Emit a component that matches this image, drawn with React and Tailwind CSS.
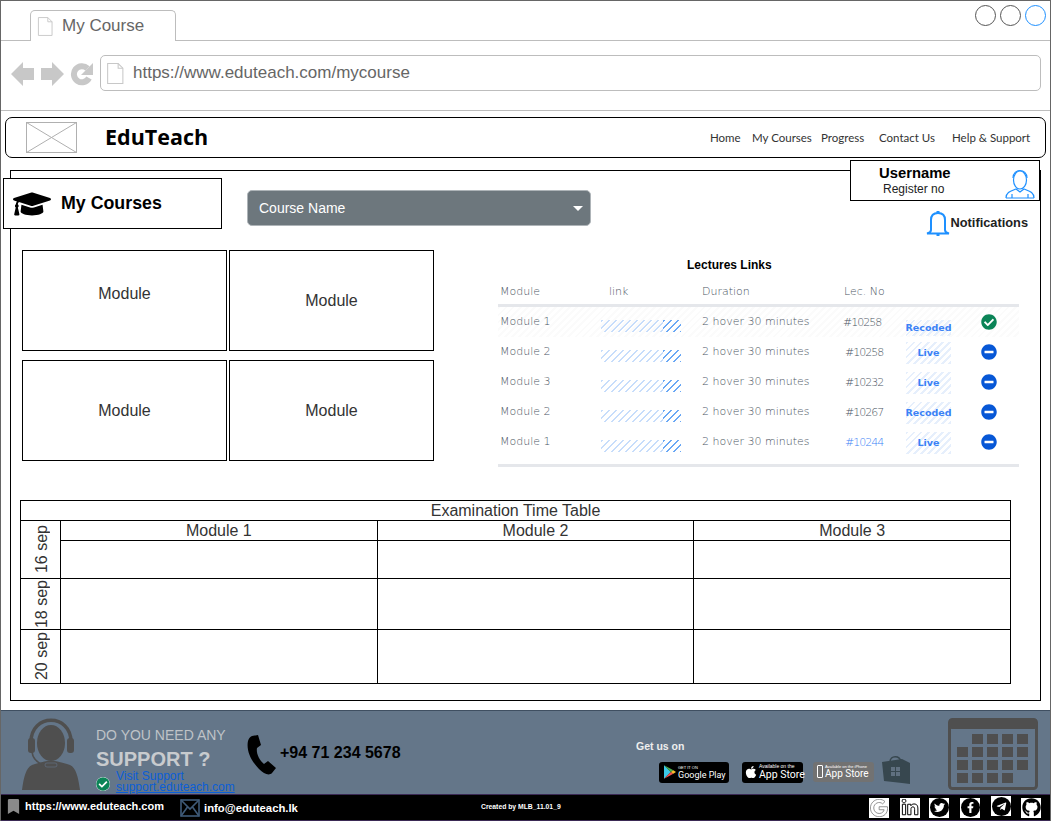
import React from "react";
import { FaGraduationCap, FaCheckCircle, FaMinusCircle, FaApple, FaTwitter, FaFacebookF, FaTelegramPlane, FaGithub, FaGoogle, FaLinkedinIn, FaBookmark } from "react-icons/fa";

const DocIcon = ({ className }) => (
  <svg viewBox="0 0 17 20" className={className} fill="none" stroke="#c8c8c8" strokeWidth="1">
    <path d="M1.5 .5h10l4.5 4.5v14.5h-14.5z" />
    <path d="M11.5 .5v4.5h4.5" />
  </svg>
);

const rows = [
  { m: "Module 1", lec: "#10258", tag: "Recoded", done: true, lecX: "ml-0", tagY: "h-[16px] translate-y-[6px]" },
  { m: "Module 2", lec: "#10258", tag: "Live", lecX: "ml-[2px]", tagY: "h-[22px] translate-y-[1px]" },
  { m: "Module 3", lec: "#10232", tag: "Live", lecX: "ml-[2px]", tagY: "h-[22px] translate-y-[1px]" },
  { m: "Module 2", lec: "#10267", tag: "Recoded", lecX: "ml-[2px]", tagY: "h-[22px] translate-y-[1px]" },
  { m: "Module 1", lec: "#10244", tag: "Live", lecX: "ml-[2px] text-[#3b82f6]", tagY: "h-[22px] translate-y-[1px]" },
];

function ModuleBox({ up }) {
  return (
    <div className={`w-[205px] h-[101px] border border-black flex items-center justify-center text-[16px] text-[#333] ${up ? "pb-[14px]" : ""}`}>
      Module
    </div>
  );
}

function LectureTable() {
  const sketch = "font-['DejaVu_Sans'] font-extralight text-[11px] text-[#4b5563]";
  return (
    <div className="w-[521px] ml-[64px]">
      <div className="pl-[189px] h-[32px] pt-[7px] text-[12px] leading-[16px] font-bold text-black">Lectures Links</div>
      <div className={`grid grid-cols-[103px_101px_141px_63px_45px_1fr] h-[25px] items-center border-b-[3px] border-[#e5e7eb] ${sketch} pb-[1px]`}>
        <span className="pl-[2px]">Module</span>
        <span className="pl-[8px]">link</span>
        <span>Duration</span>
        <span className="pl-[1px]">Lec. No</span>
        <span />
        <span />
      </div>
      <div className="border-b-[3px] border-[#e5e7eb] pb-[7px]">
        {rows.map((r, i) => (
          <div key={i} className={`grid grid-cols-[103px_101px_141px_63px_45px_1fr] h-[30px] items-center ${sketch} ${i === 0 ? "bg-[repeating-linear-gradient(135deg,#fbfbfb_0_2px,transparent_2px_5px)]" : ""}`}>
            <span className="pl-[2px]">{r.m}</span>
            <span className="h-[12px] w-[80px] translate-y-[4px] flex">
              <span className="w-[62px] bg-[repeating-linear-gradient(135deg,#c7ddfb_0_1.5px,transparent_1.5px_5px)]" />
              <span className="w-[18px] bg-[repeating-linear-gradient(135deg,#6aa8f5_0_1.5px,transparent_1.5px_5px)]" />
            </span>
            <span className="whitespace-nowrap">2 hover 30 minutes</span>
            <span className={`${r.lecX} tracking-[-1px] translate-y-[1px]`}>{r.lec}</span>
            <span className={`${r.tagY} flex items-center justify-center bg-[repeating-linear-gradient(135deg,#e6effc_0_2px,transparent_2px_5px)] font-['DejaVu_Sans'] font-bold text-[9.5px] text-[#3b82f6] whitespace-nowrap`}>{r.tag}</span>
            <span className="pl-[30px]">
              {r.done ? <FaCheckCircle className="text-[#0b8457] text-[16px]" /> : <FaMinusCircle className="text-[#0757d6] text-[16px]" />}
            </span>
          </div>
        ))}
      </div>
    </div>
  );
}

function DateLabel({ children }) {
  return (
    <div className="flex justify-center pl-[3px]">
      <span className="[writing-mode:vertical-rl] rotate-180 text-[16px] leading-[18px] text-[#333] whitespace-nowrap">{children}</span>
    </div>
  );
}

function ExamTable() {
  const cell = "border border-black p-0";
  const head = "border border-black p-0 pt-[1px] text-center text-[16px] leading-[18px]";
  const dateCell = "border border-black p-0 align-middle";
  return (
    <table className="ml-[9px] mt-[33px] w-[991px] border-collapse table-fixed text-[#333]">
      <colgroup>
        <col className="w-[40px]" />
        <col />
        <col />
        <col />
      </colgroup>
      <tbody>
        <tr className="h-[20px]">
          <td colSpan={4} className={head}>Examination Time Table</td>
        </tr>
        <tr className="h-[20px]">
          <td rowSpan={2} className={dateCell}><DateLabel>16 sep</DateLabel></td>
          <td className={head}>Module 1</td>
          <td className={head}>Module 2</td>
          <td className={head}>Module 3</td>
        </tr>
        <tr className="h-[38px]"><td className={cell} /><td className={cell} /><td className={cell} /></tr>
        <tr className="h-[51px]">
          <td className={dateCell}><DateLabel>18 sep</DateLabel></td>
          <td className={cell} /><td className={cell} /><td className={cell} />
        </tr>
        <tr className="h-[54px]">
          <td className={dateCell}><DateLabel>20 sep</DateLabel></td>
          <td className={cell} /><td className={cell} /><td className={cell} />
        </tr>
      </tbody>
    </table>
  );
}

const PersonIcon = () => (
  <svg viewBox="0 0 60 72" className="w-[60px] h-[72px] shrink-0" fill="#4f4f4f">
    <path d="M1 72 C3 58 5 50 11 47 C17 45 22 44 26 43 L34 43 C38 44 43 45 49 47 C55 50 57 58 59 72 Z" />
    <ellipse cx="30" cy="25" rx="14" ry="18" />
    <path d="M10 24 C10 -5 50 -5 50 24" fill="none" stroke="#4f4f4f" strokeWidth="3.5" />
    <rect x="7" y="20" width="7" height="15" rx="3" />
    <rect x="46" y="20" width="7" height="15" rx="3" />
    <path d="M11 34 C12 42 18 46 26 48" fill="none" stroke="#4f4f4f" strokeWidth="1.6" />
    <rect x="24" y="45" width="12" height="4" rx="2" fill="#4f4f4f" stroke="#647689" strokeWidth=".6" />
  </svg>
);

const PhoneIcon = () => (
  <svg viewBox="0 0 30 40" className="w-[30px] h-[40px] shrink-0" fill="#000">
    <path d="M5 1 L11 0 L14 10 L10 13 C9 18 12 25 17 29 L21 26 L29 33 L25 38 C22 41 17 39 12 34 C4 26 -1 15 1 6 C2 3 3 2 5 1Z" />
  </svg>
);

const CalendarIcon = () => {
  const ys = [16, 29, 42, 55];
  const rowsX = [[24, 39, 54, 69], [9, 24, 39, 54, 69], [9, 24, 39, 54, 69], [9, 24, 39, 54]];
  return (
    <svg viewBox="0 0 90 72" className="w-[90px] h-[72px]" fill="#4f4f4f">
      <rect x="1.5" y="1.5" width="87" height="69" rx="3" fill="none" stroke="#4f4f4f" strokeWidth="3" />
      <rect x="1" y="1" width="88" height="10" rx="3" />
      {rowsX.map((xs, i) => xs.map((x) => <rect key={`${i}-${x}`} x={x} y={ys[i]} width="11" height="10" />))}
    </svg>
  );
};

const BagIcon = () => (
  <svg viewBox="0 0 28 29" className="w-[28px] h-[29px]">
    <path d="M8 7 C8 0 18 0 19 7" fill="none" stroke="#37474f" strokeWidth="1.5" />
    <path d="M0 7 L20 4 L28 8 L28 29 L20 28 L2 26 Z" fill="#37474f" />
    <rect x="9" y="12" width="4" height="4" fill="#607080" />
    <rect x="14" y="12" width="4" height="4" fill="#607080" />
    <rect x="9" y="17" width="4" height="4" fill="#607080" />
    <rect x="14" y="17" width="4" height="4" fill="#607080" />
  </svg>
);

const PlayTriangle = () => (
  <svg viewBox="0 0 14 16" className="w-[12px] h-[14px] shrink-0">
    <path d="M0 0 L8 8 L0 16Z" fill="#3bc8e7" />
    <path d="M0 0 L11 6 L8 8Z" fill="#4caf50" />
    <path d="M0 16 L11 10 L8 8Z" fill="#ef5350" />
    <path d="M11 6 L14 8 L11 10 L8 8Z" fill="#fbc02d" />
  </svg>
);

const Social = ({ children, className = "" }) => (
  <div className={`w-[20px] h-[20px] bg-white flex items-center justify-center shrink-0 ${className}`}>{children}</div>
);

const Round = ({ children }) => (
  <span className="w-[19px] h-[19px] rounded-full bg-black text-white flex items-center justify-center text-[11px]">{children}</span>
);

export default function App() {
  return (
    <div className="box-border w-[1051px] h-[821px] border-x border-t border-[#666] bg-white overflow-hidden font-['Liberation_Sans',sans-serif]">
      {/* Tabs */}
      <div className="h-[40px] border-b border-[#bdbdbd] flex items-start">
        <div className="ml-[29px] mt-[9px] w-[146px] h-[31px] border border-b-0 border-[#bdbdbd] rounded-t-[5px] bg-white flex items-center pl-[6px] gap-[9px] text-[17px] text-[#666]">
          <DocIcon className="w-[16px] h-[19px]" />
          <span>My Course</span>
        </div>
        <div className="ml-auto mr-[4px] mt-[4px] flex gap-[4px]">
          <span className="w-[21px] h-[21px] rounded-full border border-[#555]" />
          <span className="w-[21px] h-[21px] rounded-full border border-[#555]" />
          <span className="w-[21px] h-[21px] rounded-full border border-[#1e90ff]" />
        </div>
      </div>
      {/* URL */}
      <div className="h-[70px] border-b border-[#bdbdbd] flex items-start pt-[14px]">
        <div className="ml-[10px] mt-[7px] flex items-center w-[89px]">
          <svg viewBox="0 0 82 24" className="w-[82px] h-[24px]" fill="#c8c8c8">
            <path d="M0 12 L12 0 V6 H23 V18 H12 V24Z" />
            <path d="M53 12 L41 0 V6 H30 V18 H41 V24Z" />
            <path d="M76.5 6.5 A8 8 0 1 0 78 16" fill="none" stroke="#c8c8c8" strokeWidth="6" />
            <path d="M82 1 V13 H70Z" />
          </svg>
        </div>
        <div className="w-[941px] h-[36px] border border-[#bdbdbd] rounded-[5px] flex items-center pl-[5px] gap-[9px] text-[17px] text-[#666]">
          <DocIcon className="w-[18px] h-[21px]" />
          <span>https://www.eduteach.com/mycourse</span>
        </div>
      </div>
      {/* Nav */}
      <div className="ml-[4px] mr-[4px] mt-[6px] h-[41px] border border-black rounded-[7px] flex items-center pl-[20px]">
        <svg viewBox="0 0 51 31" className="w-[51px] h-[31px]" fill="none" stroke="#b0b0b0">
          <rect x=".5" y=".5" width="50" height="30" />
          <path d="M.5 .5 L50.5 30.5 M50.5 .5 L.5 30.5" />
        </svg>
        <span className="ml-[28px] text-[21.5px] font-bold font-['Open_Sans'] text-black">EduTeach</span>
        <nav className="ml-auto mr-[15px] flex text-[11.5px] text-[#333] font-['Lato'] whitespace-nowrap">
          <span className="w-[42px]">Home</span>
          <span className="w-[69px]">My Courses</span>
          <span className="w-[58px]">Progress</span>
          <span className="w-[73px]">Contact Us</span>
          <span className="w-[78px]">Help &amp; Support</span>
        </nav>
      </div>
      {/* Main */}
      <div className="relative ml-[9px] mt-[12px] w-[1031px] h-[531px] border border-black">
        <div className="absolute left-[-8px] top-[7px] w-[219px] h-[51px] border border-black bg-white flex items-center pl-[9px] gap-[10px]">
          <FaGraduationCap className="text-[38px] text-black" />
          <span className="text-[17.8px] font-bold text-black">My Courses</span>
        </div>
        <div className="absolute left-[839px] top-[-11px] w-[190px] h-[41px] border border-black bg-white flex">
          <div className="w-[154px] pl-[28px] pt-[4px]">
            <div className="text-[14.8px] leading-[17px] font-bold text-black">Username</div>
            <div className="text-[12px] leading-[15px] text-[#222] pl-[4px]">Register no</div>
          </div>
          <svg viewBox="0 0 30 30" className="w-[30px] h-[30px] mt-[8px]" fill="none" stroke="#1e90ff" strokeWidth="1.2">
            <ellipse cx="15" cy="11" rx="6.5" ry="9" />
            <path d="M8 9 C8 -1 22 -1 22 9" />
            <path d="M1 29 C1 23 6 22 11 20 L15 23 L19 20 C24 22 29 23 29 29" />
            <path d="M7 25 V29 M23 25 V29 M1 29 H29" />
          </svg>
        </div>
        {/* Top row */}
        <div className="flex items-start pt-[19px] pl-[236px] h-[79px]">
          <div className="w-[344px] h-[36px] bg-[#6d777d] border border-[#aeb4b8] rounded-[5px] flex items-center pl-[11px] pr-[7px] text-[14px] text-white">
            <span className="pt-[1px]">Course Name</span>
            <span className="ml-auto w-0 h-0 border-x-[5px] border-x-transparent border-t-[5px] border-t-white" />
          </div>
          <div className="ml-auto mt-[20px] mr-[12px] flex items-center gap-[1px]">
            <svg viewBox="0 0 24 26" className="w-[24px] h-[26px]" fill="none" stroke="#1e90ff" strokeWidth="2">
              <path d="M5 20 V10 C5 5 8 3 12 3 C16 3 19 5 19 10 V20 C19 22 21 23 23 23.5 H1 C3 23 5 22 5 20Z" />
              <path d="M10.5 2 H13.5 M10.5 25 H13.5" />
            </svg>
            <span className="text-[12.8px] font-bold text-[#222]">Notifications</span>
          </div>
        </div>
        {/* Modules and lectures */}
        <div className="flex items-start pl-[11px]">
          <div className="grid grid-cols-[205px_205px] gap-x-[2px] gap-y-[9px]">
            <ModuleBox up />
            <ModuleBox />
            <ModuleBox />
            <ModuleBox />
          </div>
          <LectureTable />
        </div>
        <ExamTable />
      </div>
      {/* Footer */}
      <div className="mt-[9px] h-[85px] bg-[#647689] border-t border-[#3f4f61] border-b border-b-[#3b2a55] flex items-start">
        <div className="ml-[20px] mt-[7px]"><PersonIcon /></div>
        <div className="ml-[15px] mt-[14px] w-[151px]">
          <div className="text-[14px] leading-[20px] text-[#bfc3c7]">DO YOU NEED ANY</div>
          <div className="text-[20px] leading-[28px] font-bold text-[#c8cbce]">SUPPORT ?</div>
          <div className="flex items-center text-[12px] leading-[11px] text-[#0b5ed7] -mt-[2px]">
            <FaCheckCircle className="text-[#0b8457] text-[14px] bg-white rounded-full mr-[6px] shrink-0 mt-[3px]" />
            <div className="whitespace-nowrap">
              <div>Visit Support</div>
              <div className="underline">support.eduteach.com</div>
            </div>
          </div>
        </div>
        <div className="mt-[24px]"><PhoneIcon /></div>
        <div className="ml-[3px] mt-[30px] text-[16px] font-bold text-black whitespace-nowrap w-[356px]">+94 71 234 5678</div>
        <div className="mt-[28px] w-[275px]">
          <div className="text-[10.5px] font-bold text-[#eee]">Get us on</div>
          <div className="flex items-start mt-[3px] ml-[23px]">
            <div className="mt-[4px] w-[70px] h-[21px] bg-black rounded-[3px] flex items-center pl-[5px] gap-[2px] text-white shrink-0">
              <PlayTriangle />
              <div className="whitespace-nowrap">
                <div className="text-[4px] leading-[5px]">GET IT ON</div>
                <div className="text-[9px] leading-[10px] font-['Roboto']">Google Play</div>
              </div>
            </div>
            <div className="mt-[4px] ml-[13px] w-[61px] h-[21px] bg-black rounded-[3px] flex items-center pl-[2px] gap-[1px] text-white shrink-0">
              <FaApple className="text-[14px] shrink-0" />
              <div className="whitespace-nowrap">
                <div className="text-[5px] leading-[5px]">Available on the</div>
                <div className="text-[10.5px] leading-[11px] font-['Roboto']">App Store</div>
              </div>
            </div>
            <div className="mt-[4px] ml-[10px] w-[61px] h-[20px] bg-[#727272] rounded-[3px] flex items-center pl-[4px] gap-[2px] text-white shrink-0">
              <span className="w-[6px] h-[13px] border border-white rounded-[1px] shrink-0" />
              <div className="whitespace-nowrap">
                <div className="text-[4px] leading-[5px]">Available on the iPhone</div>
                <div className="text-[10px] leading-[10px] font-['Roboto']">App Store</div>
              </div>
            </div>
            <div className="ml-[8px] -mt-[3px]"><BagIcon /></div>
          </div>
        </div>
        <div className="ml-[37px] mt-[7px]"><CalendarIcon /></div>
      </div>
      {/* Bottom bar */}
      <div className="h-[26px] bg-black border-b border-[#3b2a55] flex items-center text-white">
        <FaBookmark className="ml-[5px] text-[#8a8a8a] text-[15px] shrink-0 -mt-[3px]" />
        <span className="ml-[4px] w-[155px] text-[11px] font-bold whitespace-nowrap -mt-[2px]">https://www.eduteach.com</span>
        <svg viewBox="0 0 20 18" className="w-[20px] h-[18px] shrink-0" fill="none" stroke="#3f5a78" strokeWidth="1.6">
          <rect x="1" y="1" width="18" height="16" />
          <path d="M1 1 L10 10 L19 1 M1 17 L7.5 8 M19 17 L12.5 8" />
        </svg>
        <span className="ml-[4px] w-[277px] text-[11.3px] font-bold whitespace-nowrap mt-[2px]">info@eduteach.lk</span>
        <span className="w-[388px] text-[6.8px] font-bold whitespace-nowrap">Created by MLB_11.01_9</span>
        <div className="flex items-center">
          <Social><FaGoogle className="text-[18px] text-white [&_path]:stroke-[#777] [&_path]:stroke-[22px]" /></Social>
          <Social className="ml-[11px]"><FaLinkedinIn className="text-[18px] text-white [&_path]:stroke-black [&_path]:stroke-[28px]" /></Social>
          <Social className="ml-[9px]"><Round><FaTwitter /></Round></Social>
          <Social className="ml-[11px]"><Round><FaFacebookF /></Round></Social>
          <Social className="ml-[11px] -mt-[3px]"><Round><FaTelegramPlane /></Round></Social>
          <Social className="ml-[10px]"><FaGithub className="text-[19px] text-black" /></Social>
        </div>
      </div>
    </div>
  );
}
